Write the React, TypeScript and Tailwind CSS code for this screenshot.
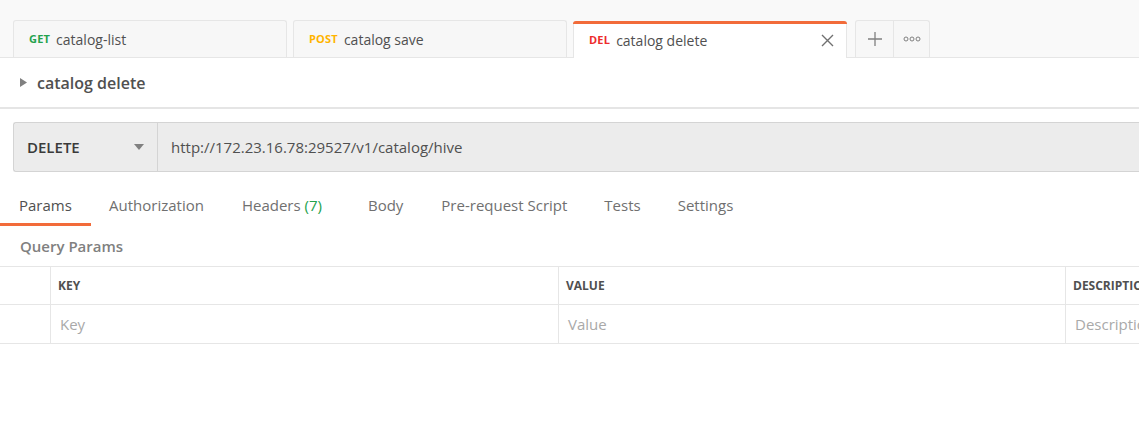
import React from "react";

const font = { fontFamily: "'Open Sans', 'Liberation Sans', sans-serif" };

function Tab({ method, color, name, active }: { method: string; color: string; name: string; active?: boolean }) {
  return (
    <div
      className={
        "relative flex h-[37px] w-[274px] items-center pt-[1px] pl-[15px] pr-[10px] border border-b-0 rounded-t-[3px] " +
        (active ? "bg-white border-[#e6e6e6]" : "bg-[#f7f7f7] border-[#e6e6e6]")
      }
    >
      {active && <div className="absolute left-[-1px] right-[-1px] top-[-1px] h-[3px] rounded-t-[3px] bg-[#f26b3a]" />}
      <span className="text-[11px] font-bold tracking-[0.2px]" style={{ color }}>
        {method}
      </span>
      <span className="ml-[6px] text-[14px] text-[#505050]">{name}</span>
      {active && (
        <svg className="ml-auto mr-[2px]" width="13" height="13" viewBox="0 0 13 13">
          <path d="M1 1L12 12M12 1L1 12" stroke="#707070" strokeWidth="1.4" />
        </svg>
      )}
    </div>
  );
}

export default function App() {
  return (
    <div className="w-[1139px] h-[435px] bg-white overflow-hidden" style={font}>
      {/* tab bar */}
      <div className="h-[58px] bg-[#f9f9f9] border-b border-[#e6e6e6] flex items-end pl-[13px] gap-[6px]">
        <Tab method="GET" color="#23a24d" name="catalog-list" />
        <Tab method="POST" color="#ffb400" name="catalog save" />
        <div className="mb-[-1px]">
          <Tab method="DEL" color="#ed2b2b" name="catalog delete" active />
        </div>
        <div className="ml-[2px] flex h-[37px] border border-b-0 border-[#e6e6e6] rounded-t-[3px] bg-[#f7f7f7]">
          <div className="w-[38px] flex items-center justify-center border-r border-[#e6e6e6]">
            <svg width="16" height="16" viewBox="0 0 16 16">
              <path d="M8 1V15M1 8H15" stroke="#808080" strokeWidth="1.3" />
            </svg>
          </div>
          <div className="w-[35px] flex items-center justify-center">
            <svg width="18" height="6" viewBox="0 0 18 6">
              <circle cx="3" cy="3" r="2" fill="none" stroke="#808080" strokeWidth="1" />
              <circle cx="9" cy="3" r="2" fill="none" stroke="#808080" strokeWidth="1" />
              <circle cx="15" cy="3" r="2" fill="none" stroke="#808080" strokeWidth="1" />
            </svg>
          </div>
        </div>
      </div>

      {/* request title */}
      <div className="h-[51px] flex items-center pl-[20px] border-b-2 border-[#e5e5e5]">
        <svg width="7" height="9" viewBox="0 0 7 9">
          <path d="M0 0L7 4.5L0 9Z" fill="#808080" />
        </svg>
        <span className="ml-[10px] text-[16px] font-semibold text-[#505050]">catalog delete</span>
      </div>

      {/* url bar */}
      <div className="pl-[13px] pt-[13px]">
        <div className="flex h-[50px] border border-r-0 border-[#d4d4d4] rounded-l-[3px] bg-[#ececec]">
          <div className="w-[144px] flex items-center pl-[13px] pr-[13px] border-r border-[#d4d4d4]">
            <span className="text-[15px] font-semibold text-[#3a3a3a]">DELETE</span>
            <svg className="ml-auto" width="10" height="6" viewBox="0 0 10 6">
              <path d="M0 0H10L5 6Z" fill="#808080" />
            </svg>
          </div>
          <div className="flex items-center pl-[13px] text-[15px] text-[#505050]">http://172.23.16.78:29527/v1/catalog/hive</div>
        </div>
      </div>

      {/* sub tabs */}
      <div className="mt-[18px] flex h-[36px] text-[15px] text-[#707070]">
        <div className="relative w-[91px] pl-[19px] pt-[4px] text-[#505050]">
          Params
          <div className="absolute left-0 right-0 bottom-0 h-[3px] bg-[#f26b3a]" />
        </div>
        <div className="pl-[18px] pt-[4px]">Authorization</div>
        <div className="pl-[38px] pt-[4px]">
          Headers <span className="text-[#23a24d]">(7)</span>
        </div>
        <div className="pl-[46px] pt-[4px]">Body</div>
        <div className="pl-[38px] pt-[4px]">Pre-request Script</div>
        <div className="pl-[37px] pt-[4px]">Tests</div>
        <div className="pl-[37px] pt-[4px]">Settings</div>
      </div>

      <div className="h-[40px] flex items-center pl-[20px] text-[15px] font-semibold text-[#808080]">Query Params</div>

      {/* table */}
      <div className="border-t border-[#e6e6e6] w-[1160px]">
        <div className="flex h-[38px] border-b border-[#e6e6e6] text-[12px] font-bold text-[#505050]">
          <div className="w-[51px] border-r border-[#e6e6e6]" />
          <div className="w-[508px] border-r border-[#e6e6e6] flex items-center pl-[7px]">KEY</div>
          <div className="w-[507px] border-r border-[#e6e6e6] flex items-center pl-[7px]">VALUE</div>
          <div className="flex-1 flex items-center pl-[7px]">DESCRIPTION</div>
        </div>
        <div className="flex h-[39px] border-b border-[#e6e6e6] text-[15px] text-[#a9a9a9]">
          <div className="w-[51px] border-r border-[#e6e6e6]" />
          <div className="w-[508px] border-r border-[#e6e6e6] flex items-center pl-[9px]">Key</div>
          <div className="w-[507px] border-r border-[#e6e6e6] flex items-center pl-[9px]">Value</div>
          <div className="flex-1 flex items-center pl-[9px]">Description</div>
        </div>
      </div>
    </div>
  );
}
